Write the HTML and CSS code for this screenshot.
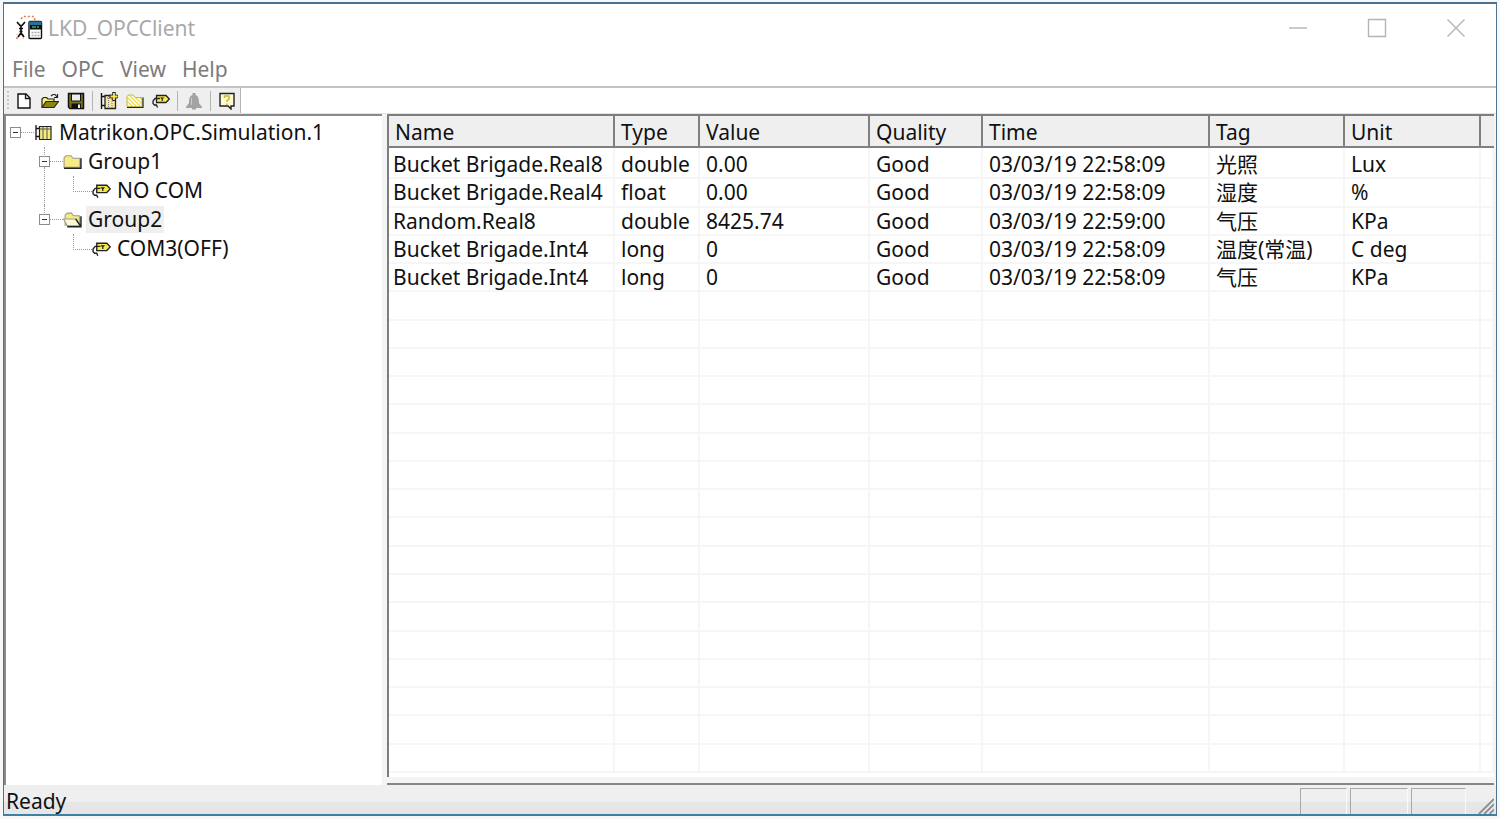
FILE: index.html
```
<!DOCTYPE html>
<html lang="en">
<head>
<meta charset="utf-8">
<title>LKD_OPCClient</title>
<link rel="stylesheet" href="styles.css">
</head>
<body>
<svg class="defs" aria-hidden="true">
  <defs>
    <pattern id="dither" width="2" height="2" patternUnits="userSpaceOnUse">
      <rect width="2" height="2" fill="#f8f060"/><path d="M0 0h1v1H0zM1 1h1v1H1z" fill="#f4e8a0"/>
    </pattern>
    <pattern id="hatch" width="4" height="4" patternUnits="userSpaceOnUse">
      <rect width="4" height="4" fill="#fff"/><path d="M-1 -1L5 5M-1 3L1 5M3 -1L5 1" stroke="#ece04a" stroke-width="1.4"/>
    </pattern>
    <symbol id="tag" viewBox="0 0 18 16">
      <path d="M4.500 2.500H14L17.300 6L14 9.500H4.500Z" fill="#f6ea50" stroke="#222" stroke-width="1.3"/>
      <path d="M8 4.500H12.500L10.800 6V8H9.600V6Z" fill="#222"/>
      <path d="M8 5.500H3L1 8V10.500L2.500 12H4.500L5.500 14.500" fill="none" stroke="#222" stroke-width="1.3"/>
    </symbol>
    <symbol id="server" viewBox="0 0 18 18">
      <path d="M1.5 1v15M1.5 4.5H5M1.5 12.5H5" stroke="#111" stroke-width="1.3" fill="none"/>
      <path d="M5 2.5H16.5V15.5H5Z" fill="url(#dither)" stroke="#222" stroke-width="1.2"/>
      <path d="M5 5H16.5M8.5 3V15M12.5 3V15" stroke="#555" stroke-width="1"/>
    </symbol>
    <symbol id="folder" viewBox="0 0 18 16">
      <path d="M1 13V4L3 2H7.5L9.5 4.5H16V13Z" fill="url(#dither)" stroke="#999" stroke-width="1"/>
      <path d="M1 14H17V4.5" fill="none" stroke="#222" stroke-width="1.4"/>
    </symbol>
    <symbol id="folder-open" viewBox="0 0 18 16">
      <path d="M2 13V3.500L4 1.500H8L10 4H15.500V13Z" fill="url(#dither)" stroke="#999" stroke-width="1"/>
      <path d="M0.500 7H12L16.500 13.500H4Z" fill="#fbf8d8" stroke="#999" stroke-width="1"/>
      <path d="M4 14.300H17V4.500M12 7L16.500 13.500" fill="none" stroke="#222" stroke-width="1.4"/>
    </symbol>
  </defs>
</svg>
<div class="window">
  <header class="titlebar">
    <svg class="app-icon" viewBox="0 0 28 28" aria-hidden="true">
      <path d="M6 5L8 2.500H19L20 6M2 25V20.500M8 20.500V25" fill="none" stroke="#e07a58" stroke-width="1.500" stroke-dasharray="2 2"/>
      <path d="M2 8L5 11.500H7L10 8M6 11V20M4 14.500H8M4.500 17.500H7.500M6 19L3 23M6 19L9 23" fill="none" stroke="#111" stroke-width="1.700"/>
      <rect x="14" y="7.500" width="12.500" height="17" rx="1" fill="#fff" stroke="#111" stroke-width="1.400"/>
      <path d="M14 7.500H26.500V11H14Z" fill="#2a6f9c"/><path d="M15 11H26V15.500H15Z" fill="#111"/>
      <path d="M17 13H21M22 13H24" stroke="#3fae6a" stroke-width="1.300"/>
      <path d="M16.500 18.500H25M16.500 21.500H25" stroke="#aaa" stroke-width="1.500" stroke-dasharray="2 1"/>
    </svg>
    <h1 class="title">LKD_OPCClient</h1>
    <div class="caption-buttons">
      <button class="caption-button" aria-label="Minimize"><svg viewBox="0 0 20 20"><path d="M1 10H19"/></svg></button>
      <button class="caption-button" aria-label="Maximize"><svg viewBox="0 0 20 20"><path d="M1.5 1.5H18.5V18.5H1.5Z"/></svg></button>
      <button class="caption-button" aria-label="Close"><svg viewBox="0 0 20 20"><path d="M1.5 1.5L18.5 18.5M18.5 1.5L1.5 18.5"/></svg></button>
    </div>
  </header>
  <nav class="menubar">
    <button class="menu">File</button>
    <button class="menu">OPC</button>
    <button class="menu">View</button>
    <button class="menu">Help</button>
  </nav>
  <div class="toolbar-row">
    <div class="toolbar" role="toolbar" aria-label="Standard">
      <span class="grip"></span>
      <button class="tool" aria-label="New"><svg viewBox="0 0 18 18"><path d="M3 2H11L15 6V16H3Z" fill="#fff" stroke="#111" stroke-width="1.4"/><path d="M10.5 2V6.5H15" fill="none" stroke="#111" stroke-width="1.3"/></svg></button>
      <button class="tool" aria-label="Open"><svg viewBox="0 0 18 18"><path d="M1 15V7L2.5 5.5H5.5L7 7H13V9.5" fill="#f6ee7a" stroke="#222" stroke-width="1.2"/><path d="M1 15.5L5 9.5H17.5L13 15.5Z" fill="#8a8410" stroke="#222" stroke-width="1.2"/><path d="M10 4L12 2.5H14L16 5M16.5 2V5.5H13" fill="none" stroke="#222" stroke-width="1.2"/></svg></button>
      <button class="tool" aria-label="Save"><svg viewBox="0 0 18 18"><path d="M1.5 1.5H16.5V16.5H3L1.5 15Z" fill="#777418" stroke="#111" stroke-width="1.5"/><path d="M4.500 2H13.500V9H4.500Z" fill="#eee" stroke="#111"/><path d="M4.500 11.500H14V16.500H4.500Z" fill="#111"/><path d="M11 12.500H13V16H11Z" fill="#eee"/></svg></button>
      <span class="separator"></span>
      <button class="tool" aria-label="Add server"><svg viewBox="0 0 18 18"><path d="M1.5 1v16M1.5 4.5H5M1.5 13.5H5" stroke="#111" stroke-width="1.4"/><path d="M5 3.5H15.5V16.5H5Z" fill="url(#dither)" stroke="#222" stroke-width="1.3"/><path d="M5 6H15M8.5 4V16M12 7V16" stroke="#777" stroke-dasharray="1 1"/><path d="M14 0V9M9.5 4.5H18" stroke="#222" stroke-width="3.4"/><path d="M14 1V8M10.5 4.5H17.5" stroke="#ffe94a" stroke-width="1.8"/></svg></button>
      <button class="tool" aria-label="Add group"><svg viewBox="0 0 18 18"><path d="M1 14.5V4.5L2.5 3H7L9 5.5H16V14.5Z" fill="url(#hatch)" stroke="#c5b84a"/><path d="M1 15.5H17V5.5" fill="none" stroke="#222" stroke-width="1.2"/></svg></button>
      <button class="tool" aria-label="Add item"><svg viewBox="0 0 18 16"><use href="#tag"/></svg></button>
      <span class="separator"></span>
      <button class="tool" aria-label="Alarm" disabled><svg viewBox="0 0 18 18"><path d="M7.5 1H10.5V3C13.5 4 14 7 14 11L17 15V16H11V17.5H7V16H1V15L4 11C4 7 4.5 4 7.5 3Z" fill="#a3a3a3"/><path d="M6.5 6V13" stroke="#ccc"/></svg></button>
      <span class="separator"></span>
      <button class="tool" aria-label="Help"><svg viewBox="0 0 18 18"><path d="M2 1.5H16V14H13V17L10 14H2Z" fill="#fffbd0" stroke="#222" stroke-width="1.4"/><path d="M6.5 6V4H11V7L9 8.5V10M9 11.5V13" fill="none" stroke="#c8b830" stroke-width="1.5"/></svg></button>
      <span class="separator separator-end"></span>
    </div>
  </div>
  <main class="workspace">
    <aside class="tree-pane">
      <ul class="tree">
        <li>
          <div class="node"><button class="toggle" aria-label="Collapse"></button><i class="dots"></i><svg class="node-icon"><use href="#server"/></svg><span class="label">Matrikon.OPC.Simulation.1</span></div>
          <ul class="branch">
            <li class="group">
              <div class="node"><button class="toggle" aria-label="Collapse"></button><i class="dots"></i><svg class="node-icon"><use href="#folder"/></svg><span class="label">Group1</span></div>
              <ul class="branch">
                <li><div class="node"><i class="elbow"></i><svg class="node-icon"><use href="#tag"/></svg><span class="label">NO COM</span></div></li>
              </ul>
            </li>
            <li class="group">
              <div class="node"><button class="toggle" aria-label="Collapse"></button><i class="dots"></i><svg class="node-icon"><use href="#folder-open"/></svg><span class="label selected">Group2</span></div>
              <ul class="branch">
                <li><div class="node"><i class="elbow"></i><svg class="node-icon"><use href="#tag"/></svg><span class="label">COM3(OFF)</span></div></li>
              </ul>
            </li>
          </ul>
        </li>
      </ul>
    </aside>
    <section class="list-pane">
      <div class="list-view">
      <table class="items">
        <colgroup><col class="c-name"><col class="c-type"><col class="c-value"><col class="c-quality"><col class="c-time"><col class="c-tag"><col class="c-unit"><col></colgroup>
        <thead><tr><th>Name</th><th>Type</th><th>Value</th><th>Quality</th><th>Time</th><th>Tag</th><th>Unit</th><th></th></tr></thead>
        <tbody>
          <tr><td>Bucket Brigade.Real8</td><td>double</td><td>0.00</td><td>Good</td><td>03/03/19 22:58:09</td><td>光照</td><td>Lux</td><td></td></tr>
          <tr><td>Bucket Brigade.Real4</td><td>float</td><td>0.00</td><td>Good</td><td>03/03/19 22:58:09</td><td>湿度</td><td>%</td><td></td></tr>
          <tr><td>Random.Real8</td><td>double</td><td>8425.74</td><td>Good</td><td>03/03/19 22:59:00</td><td>气压</td><td>KPa</td><td></td></tr>
          <tr><td>Bucket Brigade.Int4</td><td>long</td><td>0</td><td>Good</td><td>03/03/19 22:58:09</td><td>温度(常温)</td><td>C deg</td><td></td></tr>
          <tr><td>Bucket Brigade.Int4</td><td>long</td><td>0</td><td>Good</td><td>03/03/19 22:58:09</td><td>气压</td><td>KPa</td><td></td></tr>
          <tr><td></td><td></td><td></td><td></td><td></td><td></td><td></td><td></td></tr>
          <tr><td></td><td></td><td></td><td></td><td></td><td></td><td></td><td></td></tr>
          <tr><td></td><td></td><td></td><td></td><td></td><td></td><td></td><td></td></tr>
          <tr><td></td><td></td><td></td><td></td><td></td><td></td><td></td><td></td></tr>
          <tr><td></td><td></td><td></td><td></td><td></td><td></td><td></td><td></td></tr>
          <tr><td></td><td></td><td></td><td></td><td></td><td></td><td></td><td></td></tr>
          <tr><td></td><td></td><td></td><td></td><td></td><td></td><td></td><td></td></tr>
          <tr><td></td><td></td><td></td><td></td><td></td><td></td><td></td><td></td></tr>
          <tr><td></td><td></td><td></td><td></td><td></td><td></td><td></td><td></td></tr>
          <tr><td></td><td></td><td></td><td></td><td></td><td></td><td></td><td></td></tr>
          <tr><td></td><td></td><td></td><td></td><td></td><td></td><td></td><td></td></tr>
          <tr><td></td><td></td><td></td><td></td><td></td><td></td><td></td><td></td></tr>
          <tr><td></td><td></td><td></td><td></td><td></td><td></td><td></td><td></td></tr>
          <tr><td></td><td></td><td></td><td></td><td></td><td></td><td></td><td></td></tr>
          <tr><td></td><td></td><td></td><td></td><td></td><td></td><td></td><td></td></tr>
          <tr><td></td><td></td><td></td><td></td><td></td><td></td><td></td><td></td></tr>
          <tr><td></td><td></td><td></td><td></td><td></td><td></td><td></td><td></td></tr>
        </tbody>
      </table>
      </div>
    </section>
  </main>
  <footer class="statusbar">
    <span class="status-text">Ready</span>
    <span class="cell cell-caps"></span>
    <span class="cell"></span>
    <span class="cell cell-scroll"></span>
    <svg class="size-grip" viewBox="0 0 18 18" aria-hidden="true"><path d="M1 18L18 1M7 18L18 7M13 18L18 13" stroke="#8c8c8c" stroke-width="2"/></svg>
  </footer>
</div>
</body>
</html>
```
FILE: styles.css
```
* { box-sizing: border-box; }

body {
  margin: 0;
  height: 100vh;
  padding: 2px 3px 3px;
  background: #f6f7f8;
  color: #111;
  font: 21px/28px "Noto Sans", "Noto Sans CJK SC", sans-serif;
}

button { margin: 0; padding: 0; border: 0; background: none; font: inherit; color: inherit; }
ul { margin: 0; padding: 0; list-style: none; }
.defs { position: absolute; width: 0; height: 0; }

.window {
  height: 100%;
  display: flex;
  flex-direction: column;
  background: #fff;
  border: 1px solid #4d7290;
  border-bottom-color: #3f7fa4;
  border-top-width: 2px;
  border-bottom-width: 2px;
}

.titlebar { display: flex; align-items: center; height: 48px; padding: 0 1px 0 11px; }
.app-icon { width: 28px; height: 28px; }
.title { flex: 1; margin: 0 0 0 5px; font-size: 21px; font-weight: 400; color: #a9a9a9; }
.caption-buttons { display: flex; }
.caption-button { width: 79px; height: 48px; display: flex; align-items: center; justify-content: center; }
.caption-button svg { width: 20px; height: 20px; fill: none; stroke: #b4b4b4; stroke-width: 1.4; }

.menubar { display: flex; gap: 16px; height: 36px; padding-left: 8px; border-bottom: 2px solid #c4c4c4; color: #7c7c7c; }
.menu { line-height: 32px; }

.toolbar-row { display: flex; height: 26px; border-bottom: 1px solid #e4e4e4; }
.toolbar { display: flex; align-items: center; background: #efefef; padding-left: 3px; }
.grip { width: 2px; height: 20px; margin-right: 2px; background: repeating-linear-gradient(#c8c8c8 0 2px, #efefef 2px 4px); }
.tool { width: 26px; height: 24px; display: flex; align-items: center; justify-content: center; }
.tool svg { width: 18px; height: 18px; }
.separator { width: 1px; height: 20px; margin: 0 3px; background: #b4b4b4; }
.separator-end { height: 25px; margin: 0; }

.workspace { flex: 1; min-height: 0; display: flex; background: #f4f4f4; }
.tree-pane { flex: 0 0 378px; background: #fff; border: solid #8a8a8a; border-width: 2px 0 0 2px; }
.tree { padding: 2px 0 0 4px; }
.branch { padding-left: 29px; }
.node { display: flex; align-items: center; height: 29px; }
.toggle { width: 11px; height: 11px; border: 1px solid #8c8c8c; background: linear-gradient(#333, #333) center / 5px 1px no-repeat #fff; }
.dots { width: 13px; border-top: 1px dotted #999; }
.node-icon { width: 19px; height: 18px; }
.label { margin-left: 4px; padding: 0 2px; line-height: 27px; }
.selected { background: #efefef; }
.group { position: relative; }
.group::before { content: ""; position: absolute; left: 5px; top: 0; height: 10px; border-left: 1px dotted #999; }
.group:not(:last-child)::after { content: ""; position: absolute; left: 5px; top: 20px; bottom: 0; border-left: 1px dotted #999; }
.elbow { width: 19px; height: 16px; margin: 0 0 14px 5px; border: dotted #999; border-width: 0 0 1px 1px; }

.list-pane { flex: 1; min-width: 0; margin: 0 2px 0 5px; padding-bottom: 6px; border-bottom: 2px solid #858585; }
.list-view { height: 100%; padding-bottom: 4px; background: #fff; border: solid #7d7d7d; border-width: 2px 0 0 2px; }
.items { width: 100%; height: 100%; border-collapse: separate; border-spacing: 0; table-layout: fixed; }
.c-name { width: 226px; }
.c-type { width: 85px; }
.c-value { width: 170px; }
.c-quality { width: 113px; }
.c-time { width: 227px; }
.c-tag { width: 135px; }
.c-unit { width: 136px; }
th { height: 32px; padding: 2px 6px 0; text-align: left; font-weight: 400; line-height: 28px; background: #efefef; border: solid #808080; border-width: 0 2px 2px 0; }
th:last-child { border-right: 0; }
td { height: 28px; padding: 0 6px; line-height: 24px; white-space: nowrap; border: solid #f6f6f6; border-width: 0 2px 2px 0; }
td:first-child { padding-left: 4px; }
tbody tr:first-child td { height: 31px; padding-top: 3px; }

.statusbar { display: flex; align-items: stretch; gap: 3px; height: 29px; padding: 3px 2px 0 0; background: linear-gradient(#efefef 60%, #e6e6e6 60%); }
.status-text { flex: 1; padding-left: 2px; line-height: 26px; }
.cell { width: 58px; border: solid #a8a8a8; border-width: 1px 0 0 1px; border-right: 1px solid #fafafa; }
.cell-caps { width: 47px; }
.cell-scroll { width: 55px; }
.size-grip { width: 16px; height: 16px; align-self: flex-end; margin-left: 9px; }
```
